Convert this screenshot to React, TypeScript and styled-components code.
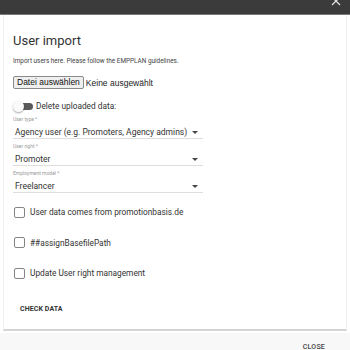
import React from "react";
import styled, { createGlobalStyle } from "styled-components";

const GlobalStyle = createGlobalStyle`
  html, body {
    margin: 0;
    padding: 0;
    background: #ffffff;
    font-family: Roboto, "Liberation Sans", Arial, sans-serif;
    color: #333333;
  }
  * { box-sizing: border-box; }
`;

const TopBar = styled.div`
  height: 15px;
  background: #3b3b3b;
  border-bottom: 1px solid #7a7a7a;
  display: flex;
  justify-content: flex-end;
  align-items: flex-start;
  padding-right: 9px;
  overflow: hidden;
`;

const CloseIcon = styled.svg`
  width: 10px;
  height: 10px;
  margin-top: -4px;
`;

const Card = styled.div`
  margin: 0 3px;
  border-left: 1px solid #f0f0f0;
  border-right: 1px solid #f0f0f0;
  border-bottom: 2px solid #d4d4d4;
  padding: 18px 9px 12px;
  display: flex;
  flex-direction: column;
`;

const Title = styled.h1`
  margin: 0;
  font-size: 13px;
  line-height: 16px;
  font-weight: 400;
  color: #333;
`;

const Description = styled.p`
  margin: 8px 0 0;
  font-size: 6.4px;
  line-height: 9px;
  color: #444;
`;

const FileRow = styled.div`
  margin-top: 10px;
  display: flex;
  align-items: center;
  gap: 2px;
  font-family: "Liberation Sans", Arial, sans-serif;
  font-size: 8.5px;
`;

const FileButton = styled.button`
  height: 13px;
  padding: 0 3px;
  font-family: "Liberation Sans", Arial, sans-serif;
  font-size: 8.5px;
  line-height: 11px;
  color: #111;
  background: #efefef;
  border: 1px solid #8a8a8a;
  border-radius: 2px;
`;

const FileStatus = styled.span`
  color: #222;
`;

const ToggleRow = styled.label`
  margin-top: 11px;
  height: 12px;
  display: flex;
  align-items: center;
  gap: 3px;
  font-size: 8.3px;
  color: #333;
`;

const Track = styled.span`
  position: relative;
  width: 19px;
  height: 7px;
  margin-left: 1px;
  border-radius: 4px;
  background: #5a5a5a;
  display: inline-block;
`;

const Knob = styled.span`
  position: absolute;
  left: -1px;
  top: -2px;
  width: 11px;
  height: 11px;
  border-radius: 50%;
  background: #fafafa;
  box-shadow: 0 1px 2px rgba(0, 0, 0, 0.35);
`;

const Field = styled.div`
  margin-top: 4px;
  width: 190px;
  display: flex;
  flex-direction: column;
`;

const FieldLabel = styled.span`
  font-size: 5px;
  line-height: 6px;
  color: #9a9a9a;
`;

const Select = styled.div`
  height: 17px;
  padding: 5px 4px 0 2px;
  border-bottom: 1px solid #dedede;
  display: flex;
  justify-content: space-between;
  font-size: 8.5px;
  line-height: 11px;
  color: #333;
`;

const Arrow = styled.span`
  width: 0;
  height: 0;
  margin-top: 4px;
  margin-right: 1px;
  border-left: 3px solid transparent;
  border-right: 3px solid transparent;
  border-top: 3px solid #444;
`;

const CheckList = styled.div`
  margin-top: 12px;
  display: flex;
  flex-direction: column;
  gap: 16.5px;
`;

const CheckRow = styled.label`
  height: 14px;
  display: flex;
  align-items: center;
  gap: 5px;
  padding-left: 1px;
  font-size: 8.3px;
  color: #333;
`;

const Box = styled.span`
  width: 11px;
  height: 11px;
  border: 1px solid #858585;
  border-radius: 2px;
  background: #fff;
`;

const TextButton = styled.button`
  align-self: flex-start;
  margin-top: 21px;
  height: 16px;
  padding: 0 7px;
  background: none;
  border: none;
  font-family: Roboto, "Liberation Sans", Arial, sans-serif;
  font-size: 7px;
  font-weight: 700;
  letter-spacing: 0.1px;
  color: #333;
`;

const Footer = styled.div`
  margin-top: 2px;
  height: 18px;
  background: #f8f8f8;
  display: flex;
  justify-content: flex-end;
  align-items: flex-end;
  padding-right: 25px;
`;

const FooterButton = styled.span`
  font-size: 7px;
  line-height: 8px;
  font-weight: 500;
  color: #444;
  letter-spacing: 0.2px;
`;

const fields = [
  { label: "User type *", value: "Agency user (e.g. Promoters, Agency admins)" },
  { label: "User right *", value: "Promoter" },
  { label: "Employment model *", value: "Freelancer" },
];

const checks = [
  "User data comes from promotionbasis.de",
  "##assignBasefilePath",
  "Update User right management",
];

export default function App() {
  return (
    <>
      <GlobalStyle />
      <TopBar>
        <CloseIcon viewBox="0 0 10 10">
          <path d="M1 1 L9 9 M9 1 L1 9" stroke="#e0e0e0" strokeWidth="1.3" />
        </CloseIcon>
      </TopBar>
      <Card>
        <Title>User import</Title>
        <Description>Import users here. Please follow the EMPPLAN guidelines.</Description>
        <FileRow>
          <FileButton>Datei auswählen</FileButton>
          <FileStatus>Keine ausgewählt</FileStatus>
        </FileRow>
        <ToggleRow>
          <Track>
            <Knob />
          </Track>
          Delete uploaded data:
        </ToggleRow>
        {fields.map((f) => (
          <Field key={f.label}>
            <FieldLabel>{f.label}</FieldLabel>
            <Select>
              <span>{f.value}</span>
              <Arrow />
            </Select>
          </Field>
        ))}
        <CheckList>
          {checks.map((c) => (
            <CheckRow key={c}>
              <Box />
              {c}
            </CheckRow>
          ))}
        </CheckList>
        <TextButton>CHECK DATA</TextButton>
      </Card>
      <Footer>
        <FooterButton>CLOSE</FooterButton>
      </Footer>
    </>
  );
}
